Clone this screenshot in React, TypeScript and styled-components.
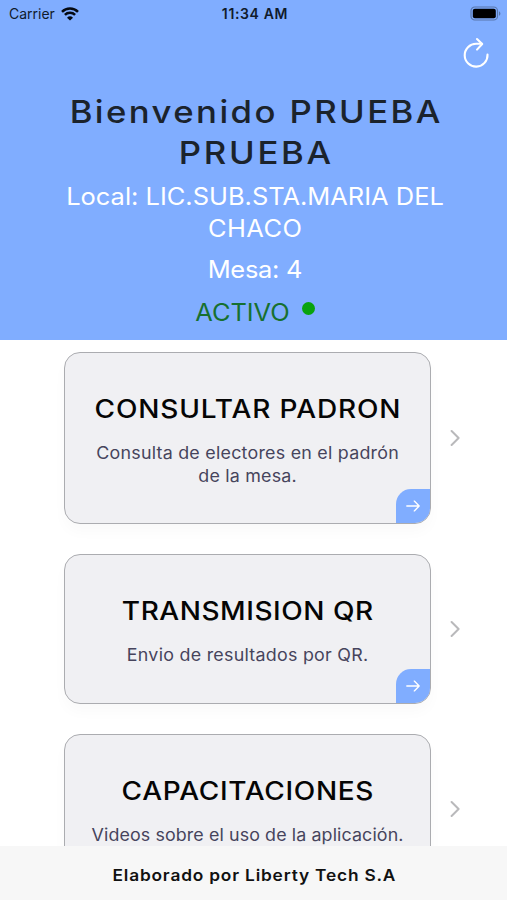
import React from "react";
import styled, { createGlobalStyle } from "styled-components";

const GlobalStyle = createGlobalStyle`
  * { box-sizing: border-box; }
  body { margin: 0; background: #fff; font-family: Inter, "Open Sans", sans-serif; }
`;

const Screen = styled.div`
  display: flex;
  flex-direction: column;
  width: 100%;
  height: 900px;
  overflow: hidden;
  background: #fff;
`;

const Header = styled.header`
  flex: none;
  height: 340.4px;
  display: flex;
  flex-direction: column;
  background: #80adff;
`;

const StatusBar = styled.div`
  display: grid;
  grid-template-columns: 1fr auto 1fr;
  align-items: center;
  height: 27px;
  padding: 0 6px 0 9px;
  color: #101b2c;
  font-size: 14px;
`;

const Carrier = styled.div`
  display: flex;
  align-items: center;
  gap: 6px;
  line-height: 20px;
`;

const Clock = styled.div`
  font-weight: 600;
  letter-spacing: 0.65px;
  line-height: 20px;
`;

const BatterySlot = styled.div`
  display: flex;
  justify-content: flex-end;
`;

const Toolbar = styled.div`
  display: flex;
  justify-content: flex-end;
  height: 65px;
  padding: 10px 17px 0 0;
`;

/* Wide geometric lettering: stretched horizontally with its own tracking. */
const Line = styled.span<{ $stretch: number; $track: number }>`
  display: block;
  white-space: nowrap;
  text-indent: ${(p) => p.$track}px;
  letter-spacing: ${(p) => p.$track}px;
  transform: scaleX(${(p) => p.$stretch});
`;

const Welcome = styled.h1`
  margin: 0 0 8px;
  padding-left: 3px;
  text-align: center;
  color: #1b232c;
  font-size: 31px;
  font-weight: 500;
  line-height: 40.5px;
`;

const Place = styled.p`
  margin: 0;
  padding-left: 3px;
  text-align: center;
  color: #fff;
  font-size: 24px;
  line-height: 32px;
`;

const Table = styled(Place)`
  margin-top: 9px;
`;

const State = styled.div`
  display: flex;
  justify-content: center;
  gap: 15px;
  margin-top: 11px;
  padding-left: 6px;
  color: #17702f;
  font-size: 24px;
  line-height: 32px;
`;

const Dot = styled.i`
  width: 13px;
  height: 13px;
  margin-top: 5px;
  border-radius: 50%;
  background: #09a30d;
`;

const List = styled.main`
  flex: 1;
  min-height: 0;
  display: flex;
  flex-direction: column;
  gap: 30.5px;
  padding: 12px 46px 0 64px;
  overflow: hidden;
`;

const Row = styled.div`
  flex: none;
  display: flex;
  align-items: center;
  gap: 19px;
`;

const Card = styled.section`
  position: relative;
  width: 367px;
  padding: 39.5px 0 35.9px;
  border: 1px solid #abacb0;
  border-radius: 16px;
  background: #f0f0f3;
  box-shadow: 0 8px 14px rgba(0, 0, 0, 0.025);
  text-align: center;
  overflow: hidden;
`;

const CardTitle = styled.h2`
  margin: 0 0 17.5px;
  color: #050505;
  font-size: 25px;
  font-weight: 500;
  line-height: 32px;
`;

const CardText = styled.p`
  margin: 0;
  color: #46445c;
  font-size: 17px;
  font-weight: 400;
  line-height: 22.3px;
`;

const Corner = styled.div`
  position: absolute;
  right: 0;
  bottom: 0;
  display: flex;
  align-items: center;
  justify-content: center;
  width: 34px;
  height: 34px;
  border-top-left-radius: 15px;
  background: #80adff;
`;

const Footer = styled.footer`
  flex: none;
  height: 54px;
  padding: 17px 0 0 1px;
  background: #f7f7f7;
  color: #111;
  text-align: center;
  font-size: 16px;
  font-weight: 600;
  line-height: 24px;
`;

type TextLine = { text: string; track: number };

const menu: { title: TextLine; lines: TextLine[] }[] = [
  {
    title: { text: "CONSULTAR PADRON", track: 0.76 },
    lines: [
      { text: "Consulta de electores en el padrón", track: 0.23 },
      { text: "de la mesa.", track: 0.2 },
    ],
  },
  {
    title: { text: "TRANSMISION QR", track: 0.49 },
    lines: [{ text: "Envio de resultados por QR.", track: 0.25 }],
  },
  {
    title: { text: "CAPACITACIONES", track: 0.6 },
    lines: [{ text: "Videos sobre el uso de la aplicación.", track: 0.1 }],
  },
];

const WifiIcon = () => (
  <svg width="18" height="14" viewBox="0 0 18 14" fill="none" stroke="#050a12" strokeWidth="2.5">
    <path d="M1 4.8a11.3 11.3 0 0 1 16 0" />
    <path d="M3.9 7.9a7.2 7.2 0 0 1 10.2 0" />
    <path d="M9 13.6 6 10.7a4.3 4.3 0 0 1 6 0z" fill="#050a12" stroke="none" />
  </svg>
);

const BatteryIcon = () => (
  <svg width="31" height="15" viewBox="0 0 31 15">
    <rect x="1" y="1" width="26.5" height="13" rx="3.8" fill="none" stroke="#5877ac" strokeWidth="1.2" />
    <rect x="2.8" y="2.8" width="23" height="9.4" rx="2" fill="#000" />
    <path d="M29 5.2c1.9.8 1.9 3.8 0 4.6z" fill="#5877ac" />
  </svg>
);

const RefreshIcon = () => (
  <svg width="28" height="32" viewBox="0 0 28 32" fill="none" stroke="#fff" strokeWidth="2.1" strokeLinecap="round" strokeLinejoin="round">
    <path d="M25.5 17.6A11.4 11.4 0 1 1 14.1 6.8H20" />
    <path d="M15 2 20.2 7 15 12.6" />
  </svg>
);

const ArrowIcon = () => (
  <svg width="16" height="14" viewBox="0 0 16 14" fill="none" stroke="#fff" strokeWidth="1.35" strokeLinecap="round" strokeLinejoin="round">
    <path d="M1.8 7h12.4M9.3 2.1 14.2 7l-4.9 4.9" />
  </svg>
);

const ChevronIcon = () => (
  <svg width="10" height="18" viewBox="0 0 10 18" fill="none" stroke="#b9b9bb" strokeWidth="2" strokeLinecap="round" strokeLinejoin="round">
    <path d="M1.6 2 8.6 9l-7 7" />
  </svg>
);

export default function App() {
  return (
    <Screen>
      <GlobalStyle />
      <Header>
        <StatusBar>
          <Carrier>
            Carrier <WifiIcon />
          </Carrier>
          <Clock>11:34 AM</Clock>
          <BatterySlot>
            <BatteryIcon />
          </BatterySlot>
        </StatusBar>
        <Toolbar>
          <RefreshIcon />
        </Toolbar>
        <Welcome>
          <Line $stretch={1.12} $track={2.15}>Bienvenido PRUEBA</Line>
          <Line $stretch={1.12} $track={2.4}>PRUEBA</Line>
        </Welcome>
        <Place>
          <Line $stretch={1.06} $track={0}>Local: LIC.SUB.STA.MARIA DEL</Line>
          <Line $stretch={1.06} $track={0.4}>CHACO</Line>
        </Place>
        <Table>
          <Line $stretch={1.06} $track={-0.28}>Mesa: 4</Line>
        </Table>
        <State>
          <Line $stretch={1.06} $track={-0.05}>ACTIVO</Line>
          <Dot />
        </State>
      </Header>
      <List>
        {menu.map(({ title, lines }) => (
          <Row key={title.text}>
            <Card>
              <CardTitle>
                <Line $stretch={1.12} $track={title.track}>{title.text}</Line>
              </CardTitle>
              <CardText>
                {lines.map((l) => (
                  <Line key={l.text} $stretch={1.05} $track={l.track}>{l.text}</Line>
                ))}
              </CardText>
              <Corner>
                <ArrowIcon />
              </Corner>
            </Card>
            <ChevronIcon />
          </Row>
        ))}
      </List>
      <Footer>
        <Line $stretch={1.08} $track={0.76}>Elaborado por Liberty Tech S.A</Line>
      </Footer>
    </Screen>
  );
}
